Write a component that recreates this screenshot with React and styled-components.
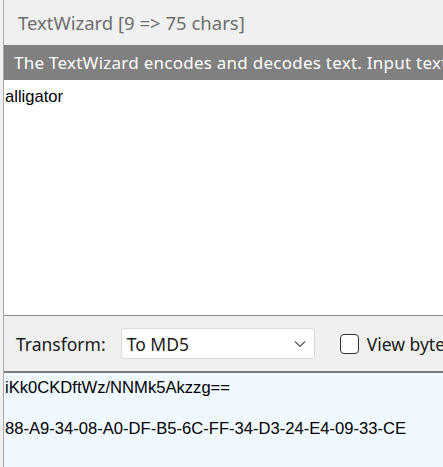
import React from 'react'
import styled, { createGlobalStyle } from 'styled-components'

const Global = createGlobalStyle`
  html, body {
    margin: 0;
    padding: 0;
    background: #f0f0f0;
    overflow: hidden;
  }
`

const Frame = styled.div`
  width: 443px;
  height: 467px;
  display: flex;
  padding-left: 3px;
  box-sizing: border-box;
  background: #f0f0f0;
`

const Window = styled.div`
  flex: 1;
  display: flex;
  flex-direction: column;
  border-left: 1px solid #a9a9a9;
  min-width: 0;
`

const TitleBar = styled.div`
  height: 45px;
  display: flex;
  align-items: center;
  padding-left: 14px;
  font-family: "Noto Sans", sans-serif;
  font-size: 18.5px;
  color: #6e6e6e;
  flex-shrink: 0;
`

const Banner = styled.div`
  height: 35px;
  display: flex;
  align-items: center;
  padding-left: 10px;
  background: #808080;
  color: #ffffff;
  font-family: "Noto Sans", sans-serif;
  font-size: 17px;
  letter-spacing: 0.25px;
  white-space: nowrap;
  overflow: hidden;
  flex-shrink: 0;
`

const TextBox = styled.div`
  height: 236px;
  box-sizing: border-box;
  background: #ffffff;
  border-bottom: 1px solid #8a8a8a;
  padding: 7px 1px;
  font-family: "Liberation Sans", Arial, sans-serif;
  font-size: 16.6px;
  line-height: 20px;
  color: #000;
  flex-shrink: 0;
  white-space: pre;
`

const Toolbar = styled.div`
  height: 55px;
  display: flex;
  align-items: center;
  padding-left: 12px;
  font-family: "Noto Sans", sans-serif;
  font-size: 17.5px;
  color: #1a1a1a;
  flex-shrink: 0;
  white-space: nowrap;
`

const Label = styled.span`
  margin-right: 15px;
`

const Select = styled.div`
  width: 194px;
  height: 31px;
  box-sizing: border-box;
  display: flex;
  align-items: center;
  justify-content: space-between;
  padding: 0 8px 0 5px;
  background: #ffffff;
  border: 1px solid #d9d9d9;
  border-radius: 3px;
  margin-right: 25px;
  flex-shrink: 0;
`

const Check = styled.span`
  width: 19px;
  height: 20px;
  box-sizing: border-box;
  border: 1px solid #333;
  border-radius: 4px;
  background: #fff;
  margin-right: 8px;
  flex-shrink: 0;
`

const Output = styled.div`
  flex: 1;
  background: #f0f8ff;
  border-top: 2px solid #7a7a7a;
  padding: 5px 1px;
  font-family: "Liberation Sans", Arial, sans-serif;
  font-size: 16.6px;
  line-height: 20.5px;
  color: #000;
  white-space: pre;
`

const Chevron = () => (
  <svg width="12" height="8" viewBox="0 0 12 8">
    <path d="M1 1.5 L6 6.5 L11 1.5" fill="none" stroke="#555" strokeWidth="1.2" />
  </svg>
)

export default function App() {
  return (
    <>
      <Global />
      <Frame>
        <Window>
          <TitleBar>TextWizard [9 =&gt; 75 chars]</TitleBar>
          <Banner>The TextWizard encodes and decodes text. Input text</Banner>
          <TextBox>alligator</TextBox>
          <Toolbar>
            <Label>Transform:</Label>
            <Select>
              <span>To MD5</span>
              <Chevron />
            </Select>
            <Check />
            <span>View bytes</span>
          </Toolbar>
          <Output>{'iKk0CKDftWz/NNMk5Akzzg==\n\n88-A9-34-08-A0-DF-B5-6C-FF-34-D3-24-E4-09-33-CE'}</Output>
        </Window>
      </Frame>
    </>
  )
}
